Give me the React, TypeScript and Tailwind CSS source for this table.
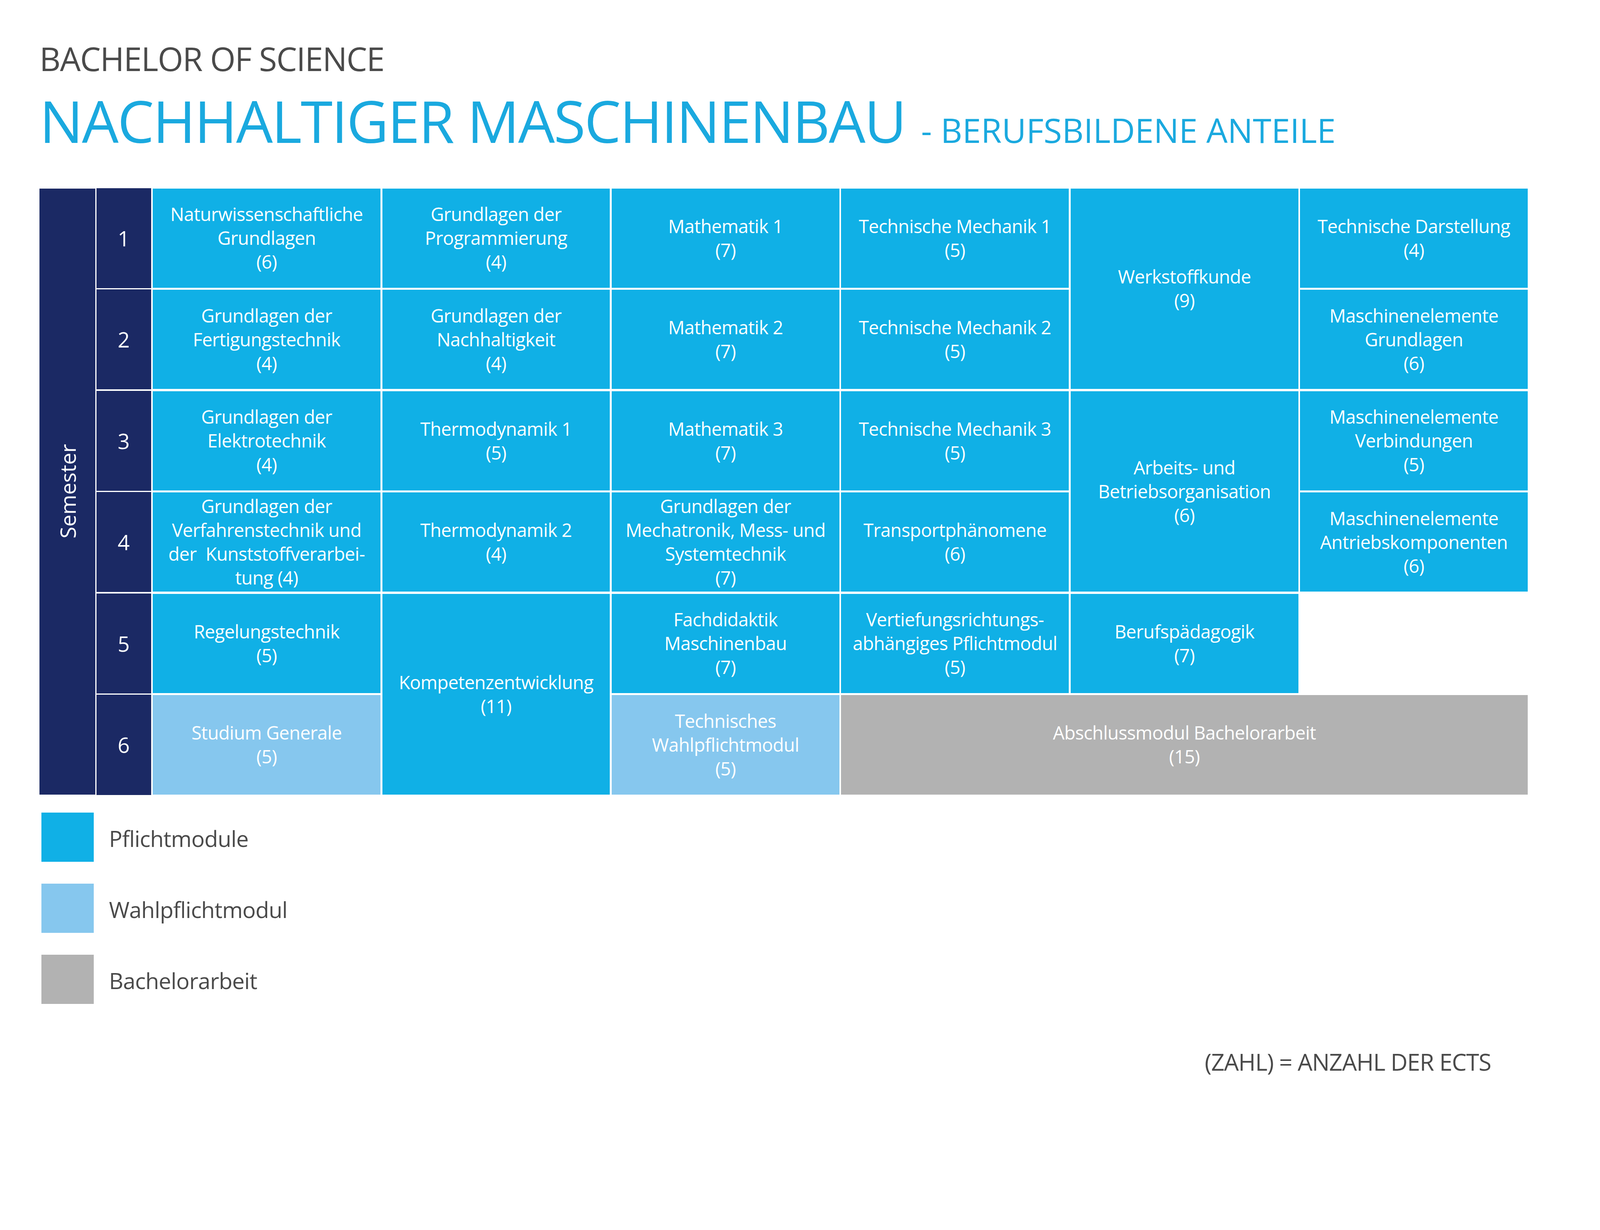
import * as React from 'react'

type Tone = 'main' | 'elective' | 'thesis'

type Module = {
  lines: string[]
  place: string
  tone?: Tone
}

const toneClass: Record<Tone, string> = {
  main: 'bg-[#10b0e6]',
  elective: 'bg-[#86c7ee]',
  thesis: 'bg-[#b2b2b2]',
}

const modules: Module[] = [
  // Semester 1
  { lines: ['Naturwissenschaftliche', 'Grundlagen', '(6)'], place: 'col-start-3 row-start-1' },
  { lines: ['Grundlagen der', 'Programmierung', '(4)'], place: 'col-start-4 row-start-1' },
  { lines: ['Mathematik 1', '(7)'], place: 'col-start-5 row-start-1' },
  { lines: ['Technische Mechanik 1', '(5)'], place: 'col-start-6 row-start-1' },
  { lines: ['Werkstoffkunde', '(9)'], place: 'col-start-7 row-start-1 row-span-2' },
  { lines: ['Technische Darstellung', '(4)'], place: 'col-start-8 row-start-1' },
  // Semester 2
  { lines: ['Grundlagen der', 'Fertigungstechnik', '(4)'], place: 'col-start-3 row-start-2' },
  { lines: ['Grundlagen der', 'Nachhaltigkeit', '(4)'], place: 'col-start-4 row-start-2' },
  { lines: ['Mathematik 2', '(7)'], place: 'col-start-5 row-start-2' },
  { lines: ['Technische Mechanik 2', '(5)'], place: 'col-start-6 row-start-2' },
  { lines: ['Maschinenelemente', 'Grundlagen', '(6)'], place: 'col-start-8 row-start-2' },
  // Semester 3
  { lines: ['Grundlagen der', 'Elektrotechnik', '(4)'], place: 'col-start-3 row-start-3' },
  { lines: ['Thermodynamik 1', '(5)'], place: 'col-start-4 row-start-3' },
  { lines: ['Mathematik 3', '(7)'], place: 'col-start-5 row-start-3' },
  { lines: ['Technische Mechanik 3', '(5)'], place: 'col-start-6 row-start-3' },
  { lines: ['Arbeits- und', 'Betriebsorganisation', '(6)'], place: 'col-start-7 row-start-3 row-span-2' },
  { lines: ['Maschinenelemente', 'Verbindungen', '(5)'], place: 'col-start-8 row-start-3' },
  // Semester 4
  {
    lines: ['Grundlagen der', 'Verfahrenstechnik und', 'der\u00a0 Kunststoffverarbei-', 'tung (4)'],
    place: 'col-start-3 row-start-4',
  },
  { lines: ['Thermodynamik 2', '(4)'], place: 'col-start-4 row-start-4' },
  { lines: ['Grundlagen der', 'Mechatronik, Mess- und', 'Systemtechnik', '(7)'], place: 'col-start-5 row-start-4' },
  { lines: ['Transportphänomene', '(6)'], place: 'col-start-6 row-start-4' },
  { lines: ['Maschinenelemente', 'Antriebskomponenten', '(6)'], place: 'col-start-8 row-start-4' },
  // Semester 5
  { lines: ['Regelungstechnik', '(5)'], place: 'col-start-3 row-start-5' },
  { lines: ['Kompetenzentwicklung', '(11)'], place: 'col-start-4 row-start-5 row-span-2' },
  { lines: ['Fachdidaktik', 'Maschinenbau', '(7)'], place: 'col-start-5 row-start-5' },
  { lines: ['Vertiefungsrichtungs-', 'abhängiges Pflichtmodul', '(5)'], place: 'col-start-6 row-start-5' },
  { lines: ['Berufspädagogik', '(7)'], place: 'col-start-7 row-start-5' },
  // Semester 6
  { lines: ['Studium Generale', '(5)'], place: 'col-start-3 row-start-6', tone: 'elective' },
  { lines: ['Technisches', 'Wahlpflichtmodul', '(5)'], place: 'col-start-5 row-start-6', tone: 'elective' },
  { lines: ['Abschlussmodul Bachelorarbeit', '(15)'], place: 'col-start-6 row-start-6 col-span-3', tone: 'thesis' },
]

const semesterRows = [
  'row-start-1',
  'row-start-2',
  'row-start-3',
  'row-start-4',
  'row-start-5',
  'row-start-6',
]

const legend: { label: string; tone: Tone }[] = [
  { label: 'Pflichtmodule', tone: 'main' },
  { label: 'Wahlpflichtmodul', tone: 'elective' },
  { label: 'Bachelorarbeit', tone: 'thesis' },
]

function ModuleCell({ lines, place, tone = 'main' }: Module) {
  return (
    <div
      className={`${place} ${toneClass[tone]} flex flex-col items-center justify-center text-center text-white text-[47px] leading-[61px] tracking-[-0.015em]`}
    >
      {lines.map((line) => (
        <span key={line} className="whitespace-pre">
          {line}
        </span>
      ))}
    </div>
  )
}

export default function App() {
  return (
    <div className="min-h-screen w-full bg-white pl-[101px] pt-[108px] pb-[80px] font-['Open_Sans','Noto_Sans',sans-serif]">
      <h2 className="text-[84px] leading-none text-[#4a4a4a] tracking-[-0.02em]">BACHELOR OF SCIENCE</h2>

      <h1 className="mt-[43px] flex items-baseline text-[#1aa9df] leading-none">
        <span className="text-[148.5px] tracking-[-0.02em]">NACHHALTIGER MASCHINENBAU</span>
        <span className="ml-[40px] text-[86px]">- BERUFSBILDENE ANTEILE</span>
      </h1>

      <div className="mt-[99px] grid w-[3810px] h-[1552px] grid-cols-[143px_138px_repeat(6,minmax(0,1fr))] grid-rows-6 gap-x-[4.6px] gap-y-[5.2px]">
        <div className="col-start-1 row-start-1 row-span-6 bg-[#1b2964] flex items-center justify-center">
          <span className="[writing-mode:vertical-rl] rotate-180 text-white text-[55px] leading-none">
            Semester
          </span>
        </div>

        {semesterRows.map((row, i) => (
          <div
            key={row}
            className={`col-start-2 ${row} -ml-[1.8px] -my-[1px] bg-[#1b2964] flex items-center justify-center text-white text-[54px] leading-none`}
          >
            {i + 1}
          </div>
        ))}

        {modules.map((m) => (
          <ModuleCell key={m.lines.join(' ')} {...m} />
        ))}
      </div>

      <div className="mt-[46px] flex flex-col gap-[56px] pl-[5px]">
        {legend.map((item) => (
          <div key={item.label} className="flex items-center">
            <div className={`w-[134px] h-[126px] ${toneClass[item.tone]}`} />
            <span className="ml-[39px] pt-[8px] text-[57px] leading-none text-[#4a4a4a] tracking-[-0.015em]">
              {item.label}
            </span>
          </div>
        ))}
      </div>

      <div className="w-[3716px] mt-[118px] text-right text-[60px] leading-none text-[#4a4a4a] tracking-[-0.02em]">
        (ZAHL) = ANZAHL DER ECTS
      </div>
    </div>
  )
}
